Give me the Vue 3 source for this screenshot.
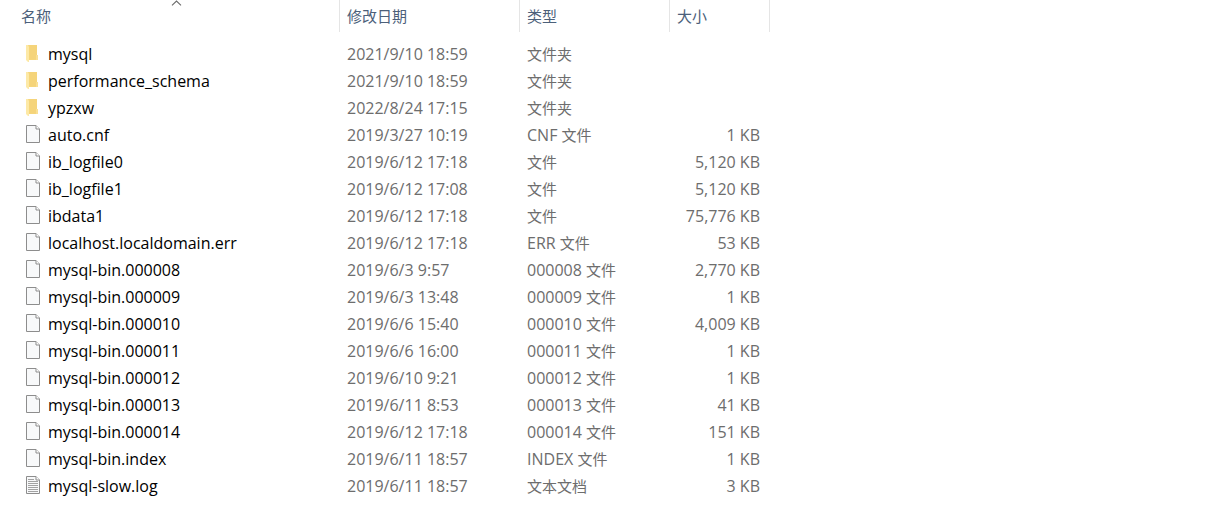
<script setup>
const columns = [
  { key: 'name', label: '名称', sorted: true },
  { key: 'date', label: '修改日期' },
  { key: 'type', label: '类型' },
  { key: 'size', label: '大小' },
]

const files = [
  ['folder', 'mysql', '2021/9/10 18:59', '', '文件夹', ''],
  ['folder', 'performance_schema', '2021/9/10 18:59', '', '文件夹', ''],
  ['folder', 'ypzxw', '2022/8/24 17:15', '', '文件夹', ''],
  ['file', 'auto.cnf', '2019/3/27 10:19', 'CNF', '文件', '1 KB'],
  ['file', 'ib_logfile0', '2019/6/12 17:18', '', '文件', '5,120 KB'],
  ['file', 'ib_logfile1', '2019/6/12 17:08', '', '文件', '5,120 KB'],
  ['file', 'ibdata1', '2019/6/12 17:18', '', '文件', '75,776 KB'],
  ['file', 'localhost.localdomain.err', '2019/6/12 17:18', 'ERR', '文件', '53 KB'],
  ['file', 'mysql-bin.000008', '2019/6/3 9:57', '000008', '文件', '2,770 KB'],
  ['file', 'mysql-bin.000009', '2019/6/3 13:48', '000009', '文件', '1 KB'],
  ['file', 'mysql-bin.000010', '2019/6/6 15:40', '000010', '文件', '4,009 KB'],
  ['file', 'mysql-bin.000011', '2019/6/6 16:00', '000011', '文件', '1 KB'],
  ['file', 'mysql-bin.000012', '2019/6/10 9:21', '000012', '文件', '1 KB'],
  ['file', 'mysql-bin.000013', '2019/6/11 8:53', '000013', '文件', '41 KB'],
  ['file', 'mysql-bin.000014', '2019/6/12 17:18', '000014', '文件', '151 KB'],
  ['file', 'mysql-bin.index', '2019/6/11 18:57', 'INDEX', '文件', '1 KB'],
  ['text', 'mysql-slow.log', '2019/6/11 18:57', '', '文本文档', '3 KB'],
].map(([icon, name, date, ext, kind, size]) => ({ icon, name, date, ext, kind, size }))
</script>

<template>
  <main class="explorer">
    <table class="list">
      <colgroup>
        <col class="col-name" />
        <col class="col-date" />
        <col class="col-type" />
        <col class="col-size" />
        <col />
      </colgroup>
      <thead>
        <tr>
          <th
            v-for="column in columns"
            :key="column.key"
            scope="col"
            :aria-sort="column.sorted ? 'ascending' : undefined"
          >
            <button type="button" class="heading">{{ column.label }}</button>
            <svg v-if="column.sorted" class="sort" viewBox="0 0 11 6" aria-hidden="true">
              <path d="M1 5.3 5.5 1 10 5.3" fill="none" stroke="#6b6b6b" stroke-width="1.1" />
            </svg>
          </th>
          <td></td>
        </tr>
      </thead>
      <tbody>
        <tr v-for="file in files" :key="file.name">
          <td class="name">
            <div class="entry">
              <svg v-if="file.icon === 'folder'" class="icon" viewBox="0 0 16 19" aria-hidden="true">
                <path d="M1 1H12V11H13V16H1Z" fill="#f6d67b" />
                <path d="M5 1H12V11H11V15H5Z" fill="#f5d47a" />
                <path d="M11 11h2v5h-2z" fill="#f9df94" />
                <path d="M1 1H3L4 3V18H3L1 16Z" fill="#fde9a6" />
              </svg>
              <svg v-else class="icon" viewBox="0 0 16 19" aria-hidden="true">
                <path d="M1.5 .5H11L14.5 4V17.5H1.5Z" fill="#f8f9fa" stroke="#8d8d8d" />
                <path d="M11 .5V4H14.5" fill="#fff" stroke="#8d8d8d" />
                <path
                  v-if="file.icon === 'text'"
                  d="M3 3.5H9M3 5.5H13M3 7.5H13M3 9.5H13M3 11.5H13M3 13.5H13M3 15.5H13"
                  stroke="#a2a2a2"
                />
              </svg>
              <span>{{ file.name }}</span>
            </div>
          </td>
          <td class="latin">{{ file.date }}</td>
          <td><span v-if="file.ext" class="latin">{{ file.ext + ' ' }}</span>{{ file.kind }}</td>
          <td class="size latin">{{ file.size }}</td>
          <td></td>
        </tr>
      </tbody>
    </table>
  </main>
</template>

<style>
body {
  margin: 0;
  background: #fff;
}
</style>

<style scoped>
.explorer {
  font-family: "Noto Sans", "Noto Sans CJK SC", sans-serif;
  font-size: 15px;
  line-height: 20px;
  color: #6d6d6d;
}

.list {
  width: 100%;
  table-layout: fixed;
  border-collapse: separate;
  border-spacing: 0;
}

.col-name {
  width: 340px;
}

.col-date {
  width: 180px;
}

.col-type {
  width: 150px;
}

.col-size {
  width: 100px;
}

th,
td {
  box-sizing: border-box;
  padding: 0 0 0 7px;
  font-weight: 400;
  text-align: left;
  white-space: nowrap;
}

th {
  position: relative;
  height: 32px;
  border-right: 1px solid #e5e5e5;
}

th:first-child {
  padding-left: 21px;
}

.heading {
  display: block;
  width: 100%;
  padding: 0;
  border: 0;
  background: none;
  color: #4c607a;
  font: inherit;
  text-align: left;
}

.sort {
  position: absolute;
  top: 0;
  left: 171px;
  width: 11px;
  height: 6px;
}

tbody::before {
  content: "";
  display: block;
  height: 8px;
}

tbody td {
  height: 27px;
}

tbody .name {
  padding-left: 25px;
  color: #000;
}

.name,
.latin {
  font-family: "Open Sans", "Noto Sans", sans-serif;
  font-size: 16px;
}

.entry {
  display: flex;
  align-items: center;
  gap: 7px;
}

.icon {
  flex: none;
  width: 16px;
  height: 19px;
}

tbody .size {
  padding-right: 10px;
  text-align: right;
}
</style>
